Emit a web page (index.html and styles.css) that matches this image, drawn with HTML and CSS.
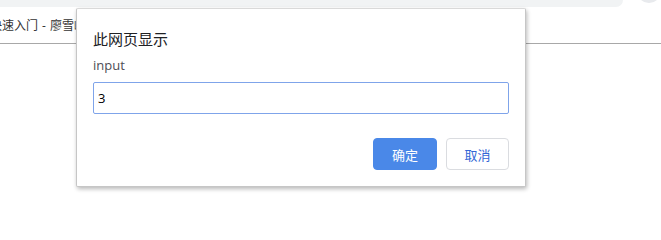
FILE: index.html
```html
<!DOCTYPE html>
<html lang="zh-CN">
<head>
<meta charset="utf-8">
<title>快速入门</title>
<link rel="stylesheet" href="styles.css">
</head>
<body>
<div class="chrome">
  <div class="toolbar">
    <div class="omnibox"></div>
    <div class="avatar"></div>
  </div>
  <div class="bookmarks">
    <span class="tab-title">快速入门 - 廖雪峰的官方网站</span>
  </div>
</div>
<div class="page"></div>
<div class="dialog">
  <div class="dialog-title">此网页显示</div>
  <div class="dialog-message">input</div>
  <input class="dialog-input" type="text" value="3">
  <div class="dialog-buttons">
    <button class="btn btn-ok">确定</button>
    <button class="btn btn-cancel">取消</button>
  </div>
</div>
</body>
</html>
```
FILE: styles.css
```css
html, body {
  margin: 0;
  padding: 0;
  background: #ffffff;
  width: 661px;
  height: 202px;
  overflow: hidden;
  font-family: "Noto Sans CJK SC", "Open Sans", sans-serif;
}

.chrome {
  display: flex;
  flex-direction: column;
}

.toolbar {
  display: flex;
  height: 8px;
  overflow: hidden;
}

.omnibox {
  width: 636px;
  height: 7px;
  background: #f1f3f4;
  border-radius: 0 0 14px 0;
}

.avatar {
  width: 24px;
  height: 24px;
  margin-left: 14px;
  margin-top: -21px;
  border-radius: 50%;
  background: #e8eaed;
}

.bookmarks {
  height: 35px;
  border-bottom: 1px solid #a8a8a8;
  display: flex;
  align-items: center;
  overflow: hidden;
}

.tab-title {
  margin-left: -10px;
  margin-top: -2px;
  font-size: 12px;
  color: #333333;
  white-space: nowrap;
  word-spacing: 1px;
  font-family: "Open Sans", "Noto Sans CJK SC", sans-serif;
}

.dialog {
  position: absolute;
  left: 76px;
  top: 8px;
  width: 416px;
  padding: 20px 16px 16px 16px;
  background: #ffffff;
  border: 1px solid #c6c6c6;
  border-top-color: #d9d9d9;
  border-radius: 2px;
  box-shadow: 1px 2px 4px rgba(0, 0, 0, 0.28);
  display: flex;
  flex-direction: column;
}

.dialog-title {
  font-size: 15px;
  line-height: 20px;
  color: #202124;
}

.dialog-message {
  margin-top: 8px;
  font-size: 13px;
  line-height: 16px;
  color: #4d4d55;
  font-family: "Open Sans", "Noto Sans CJK SC", sans-serif;
}

.dialog-input {
  margin: 9px 0 0 0;
  box-sizing: border-box;
  width: 416px;
  height: 32px;
  padding: 0 4px;
  border: 1px solid #7fa4ea;
  border-radius: 2px;
  outline: none;
  font-size: 13px;
  font-family: "Open Sans", sans-serif;
  color: #000000;
  background: #ffffff;
}

.dialog-buttons {
  margin-top: 24px;
  display: flex;
  justify-content: flex-end;
  gap: 9px;
}

.btn {
  height: 32px;
  box-sizing: border-box;
  border-radius: 4px;
  font-size: 13px;
  font-family: "Noto Sans CJK SC", sans-serif;
  padding: 0;
  cursor: pointer;
}

.btn-ok {
  width: 64px;
  background: #4a88e8;
  border: 1px solid #4a88e8;
  color: #ffffff;
}

.btn-cancel {
  width: 63px;
  background: #ffffff;
  border: 1px solid #dadce0;
  color: #3367d6;
}
```
